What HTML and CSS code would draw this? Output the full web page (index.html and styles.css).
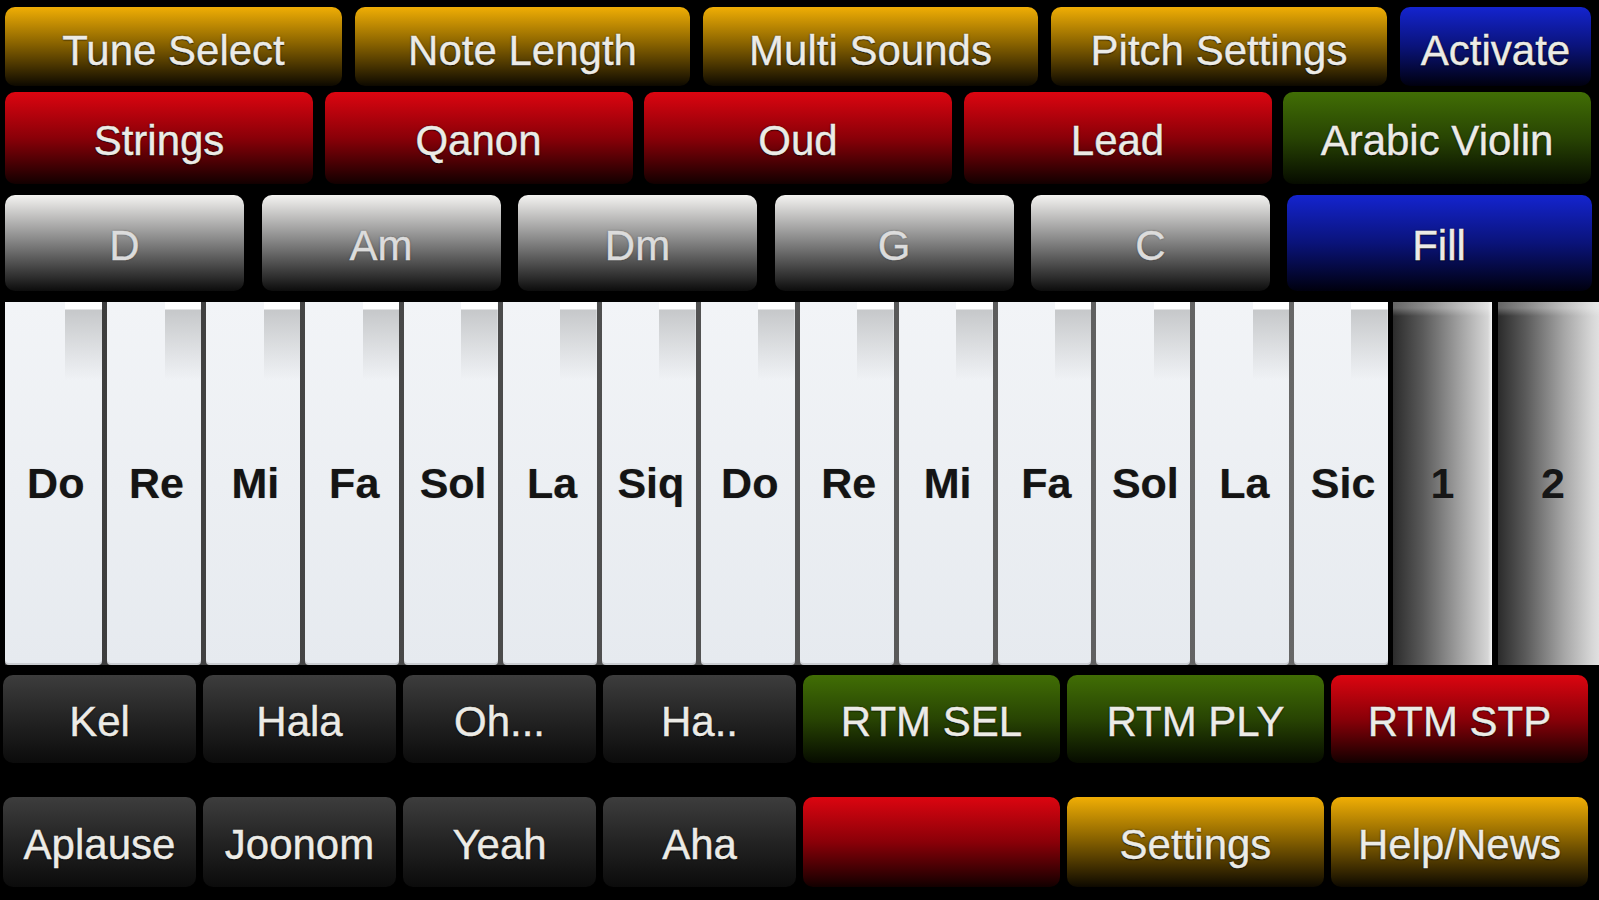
FILE: index.html
```html
<!DOCTYPE html>
<html>
<head>
<meta charset="utf-8">
<link rel="stylesheet" href="styles.css">
</head>
<body>
<div class="app">
  <div class="row row1">
    <div class="btn gold">Tune Select</div>
    <div class="btn gold">Note Length</div>
    <div class="btn gold">Multi Sounds</div>
    <div class="btn gold">Pitch Settings</div>
    <div class="btn blue">Activate</div>
  </div>
  <div class="row row2">
    <div class="btn red">Strings</div>
    <div class="btn red">Qanon</div>
    <div class="btn red">Oud</div>
    <div class="btn red">Lead</div>
    <div class="btn green">Arabic Violin</div>
  </div>
  <div class="row row3">
    <div class="btn grey">D</div>
    <div class="btn grey">Am</div>
    <div class="btn grey">Dm</div>
    <div class="btn grey">G</div>
    <div class="btn grey">C</div>
    <div class="btn blue">Fill</div>
  </div>
  <div class="keys">
    <div class="whites">
      <div class="wkey">Do</div>
      <div class="wkey">Re</div>
      <div class="wkey">Mi</div>
      <div class="wkey">Fa</div>
      <div class="wkey">Sol</div>
      <div class="wkey">La</div>
      <div class="wkey">Siq</div>
      <div class="wkey">Do</div>
      <div class="wkey">Re</div>
      <div class="wkey">Mi</div>
      <div class="wkey">Fa</div>
      <div class="wkey">Sol</div>
      <div class="wkey">La</div>
      <div class="wkey">Sic</div>
    </div>
    <div class="dkey">1</div>
    <div class="dkey">2</div>
  </div>
  <div class="row row5">
    <div class="btn dark">Kel</div>
    <div class="btn dark">Hala</div>
    <div class="btn dark">Oh...</div>
    <div class="btn dark">Ha..</div>
    <div class="btn green">RTM SEL</div>
    <div class="btn green">RTM PLY</div>
    <div class="btn red">RTM STP</div>
  </div>
  <div class="row row6">
    <div class="btn dark">Aplause</div>
    <div class="btn dark">Joonom</div>
    <div class="btn dark">Yeah</div>
    <div class="btn dark">Aha</div>
    <div class="btn red"></div>
    <div class="btn gold">Settings</div>
    <div class="btn gold">Help/News</div>
  </div>
</div>
</body>
</html>
```

FILE: styles.css
```css
* { box-sizing: border-box; }
html, body {
  margin: 0;
  padding: 0;
  background: #000;
}
body {
  width: 1599px;
  height: 900px;
  overflow: hidden;
  font-family: "Liberation Sans", Arial, Helvetica, sans-serif;
}
.app {
  display: flex;
  flex-direction: column;
}
.row {
  display: grid;
}
.btn {
  display: flex;
  align-items: center;
  justify-content: center;
  padding-top: 5px;
  border-radius: 10px;
  font-size: 42px;
  color: #ecebe6;
  -webkit-text-stroke: 0.4px #ecebe6;
  text-shadow: 0 0 2px rgba(0,0,0,0.85), 0 1px 1px rgba(0,0,0,0.7);
  white-space: nowrap;
  overflow: hidden;
}
.gold  { background: linear-gradient(to bottom, #f0ae05 0%, #8c6500 45%, #0d0900 100%); }
.red   { background: linear-gradient(to bottom, #dc0510 0%, #8a0008 50%, #120000 100%); }
.green { background: linear-gradient(to bottom, #416e05 0%, #284403 50%, #060b00 100%); }
.blue  { background: linear-gradient(to bottom, #1424cf 0%, #0a137a 50%, #00000e 100%); }
.grey  {
  background: linear-gradient(to bottom, #f4f3f1 0%, #8c8c8c 45%, #0c0c0c 100%);
  color: #dcdcdc;
  -webkit-text-stroke: 0.4px #dcdcdc;
  text-shadow: 0 0 2px rgba(0,0,0,0.5);
}
.dark  { background: linear-gradient(to bottom, #3d3d3d 0%, #232323 50%, #0b0b0b 100%); }

.row1 {
  margin-top: 7px;
  height: 79px;
  padding-left: 5px;
  grid-template-columns: 337px 335px 335px 336px 191px;
  column-gap: 13px;
}
.row1 .btn { padding-top: 9px; }
.row2 {
  margin-top: 6px;
  height: 92px;
  padding-left: 5px;
  grid-template-columns: repeat(5, 308px);
  column-gap: 11.5px;
}
.row3 {
  margin-top: 11px;
  height: 96px;
  padding-left: 5px;
  grid-template-columns: repeat(5, 239px) 304px;
  column-gap: 17.5px;
}
.row3 .blue { margin-left: -1px; }

.keys {
  margin-top: 11px;
  height: 363px;
  padding-left: 5px;
  display: flex;
  gap: 5px;
}
.whites {
  width: 1383px;
  flex: none;
  display: flex;
  gap: 5px;
  background: linear-gradient(to right, #3a3a3a, #6a6a6a);
}
.wkey {
  flex: 1;
  display: flex;
  align-items: center;
  justify-content: center;
  padding-left: 4px;
  font-size: 43px;
  font-weight: bold;
  color: #141414;
  border-radius: 0 0 4px 4px;
  background:
    linear-gradient(to bottom, #ffffff 0, #ffffff 7px, #c6c8ca 8px, rgba(234,237,241,0) 78px) right top / 39% 80px no-repeat,
    linear-gradient(to bottom, #f2f4f7, #e6eaef);
  box-shadow: inset 0 -2px 0 rgba(0,0,0,0.12);
  text-shadow: 0 0 1px rgba(0,0,0,0.4);
}
.wkey:first-child { flex: 1.04; }
.dkey {
  flex: none;
  width: 99px;
  display: flex;
  align-items: center;
  justify-content: center;
  font-size: 43px;
  font-weight: bold;
  color: #161616;
  background:
    linear-gradient(to bottom, rgba(255,255,255,0.28) 0, rgba(255,255,255,0.28) 6px, rgba(255,255,255,0) 14px),
    linear-gradient(to right, #2b2b2b 0%, #5a5a5a 30%, #a6a6a6 70%, #d6d6d6 96%, #f4f4f4 100%);
}
.dkey + .dkey {
  width: 110px;
  margin-left: 1px;
  background:
    linear-gradient(to bottom, rgba(255,255,255,0.28) 0, rgba(255,255,255,0.28) 6px, rgba(255,255,255,0) 14px),
    linear-gradient(to right, #2b2b2b 0%, #5a5a5a 25%, #a6a6a6 60%, #d6d6d6 85%, #ececec 100%);
}

.row5 {
  margin-top: 10px;
  height: 88px;
  padding-left: 3px;
  grid-template-columns: repeat(4, 193px) repeat(3, 257px);
  column-gap: 7px;
}
.row6 {
  margin-top: 34px;
  height: 90px;
  padding-left: 3px;
  grid-template-columns: repeat(4, 193px) repeat(3, 257px);
  column-gap: 7px;
}
```
